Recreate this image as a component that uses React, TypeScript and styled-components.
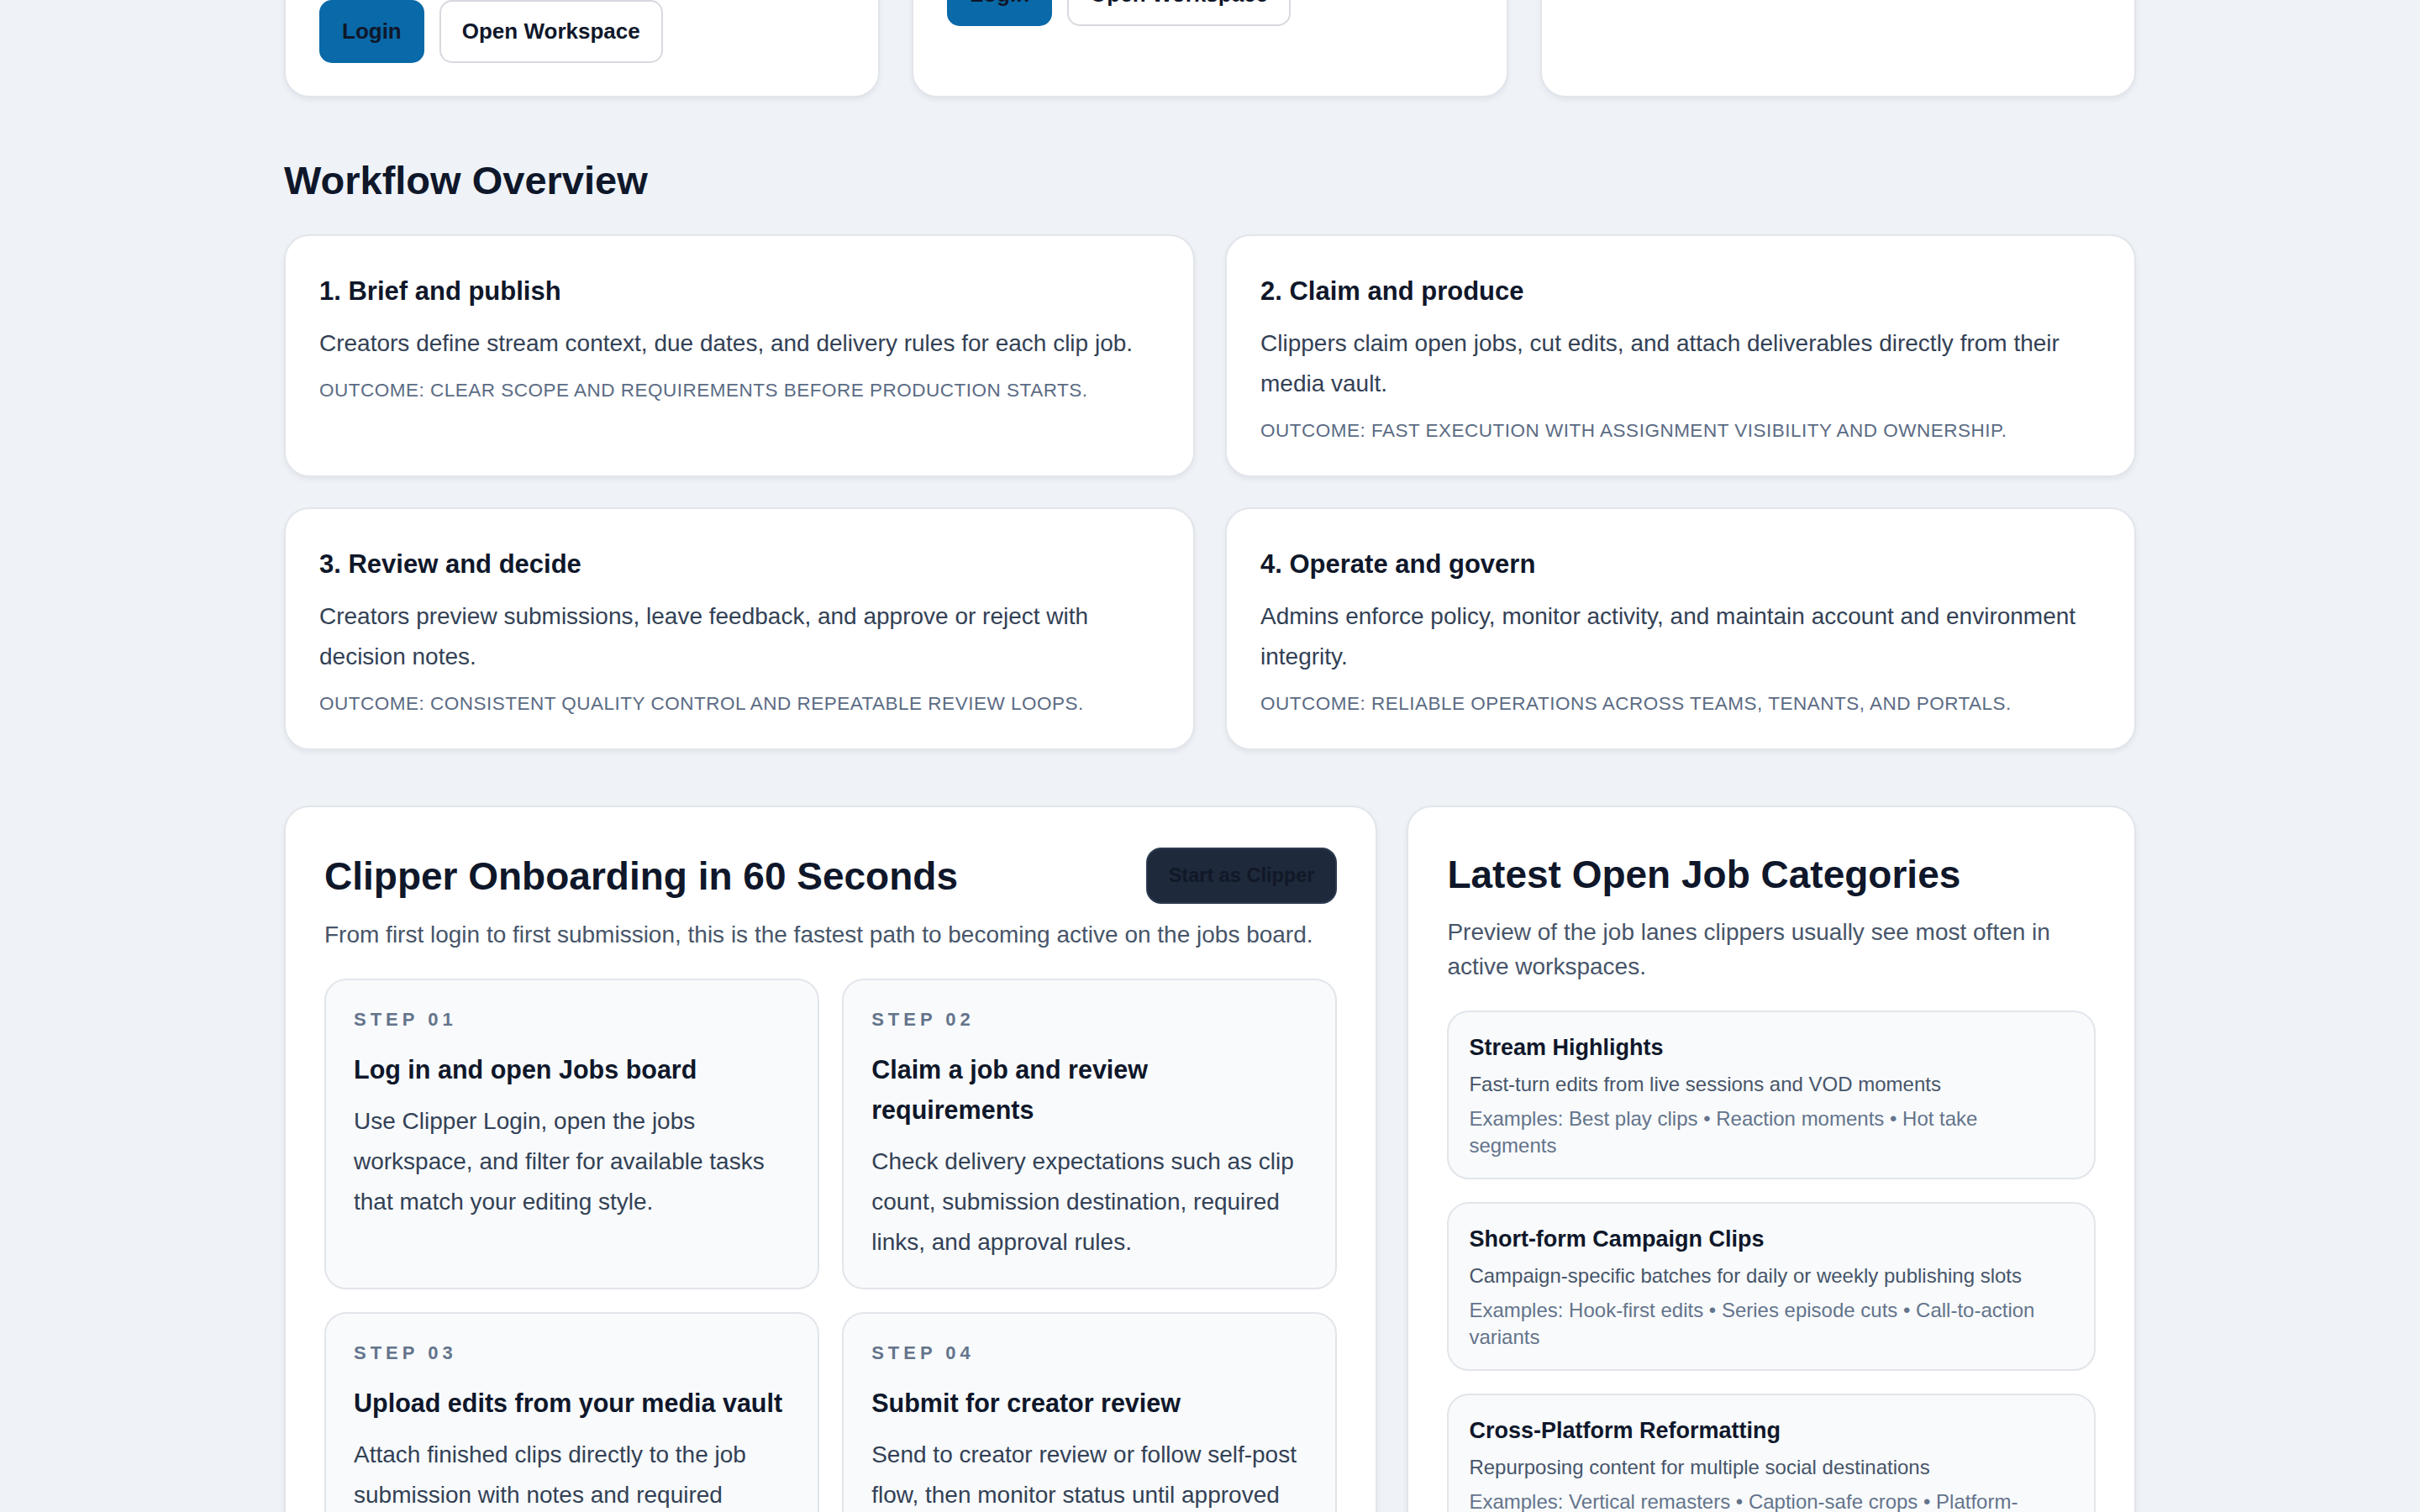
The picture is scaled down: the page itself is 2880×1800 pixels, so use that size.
import styled, { createGlobalStyle } from 'styled-components'

const GlobalStyle = createGlobalStyle`
	* {
		box-sizing: border-box;
	}
	body {
		margin: 0;
		background: #eff3f8;
		font-family: 'Liberation Sans', Arial, sans-serif;
		color: #0f172a;
	}
`

const Page = styled.main`
	width: 2204px;
	margin: -258px auto 0;
	padding-bottom: 120px;
`

const PortalRow = styled.section`
	display: grid;
	grid-template-columns: repeat(3, 1fr);
	gap: 38px;
`

const PortalCard = styled.div`
	background: #fff;
	border: 2px solid #e2e5ea;
	border-radius: 30px;
	box-shadow: 0 3px 6px rgba(15, 23, 42, 0.06);
	padding: 40px 40px 39px;
`

const PortalTitle = styled.h3`
	margin: 0 0 12px;
	font-size: 34px;
	line-height: 44px;
	font-weight: 700;
`

const PortalText = styled.p`
	margin: 0;
	font-size: 28px;
	line-height: 44px;
	color: #475569;
`

const Actions = styled.div`
	display: flex;
	gap: 18px;
	margin-top: 28px;
`

const Button = styled.button<{ $primary?: boolean }>`
	height: 75px;
	padding: 0 25px;
	border-radius: 15px;
	border: 2px solid ${(p) => (p.$primary ? '#0a69a8' : '#d6d9de')};
	background: ${(p) => (p.$primary ? '#0a69a8' : '#fff')};
	color: #0f172a;
	font-family: inherit;
	font-size: 26px;
	font-weight: 700;
`

const SectionTitle = styled.h2`
	margin: 71px 0 36px;
	font-size: 47px;
	line-height: 56px;
	font-weight: 700;
`

const WorkflowGrid = styled.section`
	display: grid;
	grid-template-columns: 1fr 1fr;
	gap: 36px;
`

const WorkflowCard = styled.div`
	background: #fff;
	border: 2px solid #e2e5ea;
	border-radius: 30px;
	box-shadow: 0 3px 6px rgba(15, 23, 42, 0.06);
	padding: 42px 40px 35px;
`

const CardTitle = styled.h3`
	margin: 0 0 14px;
	font-size: 31px;
	line-height: 48px;
	font-weight: 700;
`

const CardText = styled.p`
	margin: 0 0 14px;
	font-size: 28px;
	line-height: 48px;
	color: #334155;
`

const Outcome = styled.p`
	margin: 0;
	font-size: 22.5px;
	line-height: 36px;
	letter-spacing: 0.5px;
	text-transform: uppercase;
	color: #5b6b84;
`

const BottomGrid = styled.section`
	display: grid;
	grid-template-columns: 1.5fr 1fr;
	gap: 35px;
	align-items: start;
	margin-top: 66px;
`

const Panel = styled.div`
	background: #fff;
	border: 2px solid #e2e5ea;
	border-radius: 30px;
	box-shadow: 0 3px 6px rgba(15, 23, 42, 0.06);
	padding: 48px 46px 46px;
`

const PanelHead = styled.div`
	display: flex;
	align-items: center;
	justify-content: space-between;
	gap: 24px;
`

const PanelTitle = styled.h2`
	margin: 0;
	font-size: 46px;
	line-height: 64px;
	font-weight: 700;
`

const DarkButton = styled.button`
	height: 67px;
	padding: 0 25px;
	border-radius: 18px;
	border: 2px solid #2c3a50;
	background: #1e293b;
	color: #111827;
	font-family: inherit;
	font-size: 23.5px;
	font-weight: 700;
`

const PanelSub = styled.p`
	margin: 16px 0 32px;
	font-size: 28px;
	line-height: 41px;
	color: #475569;
`

const StepGrid = styled.div`
	display: grid;
	grid-template-columns: 1fr 1fr;
	gap: 27px;
`

const StepCard = styled.div`
	background: #f8fafc;
	border: 2px solid #e2e5ea;
	border-radius: 26px;
	padding: 32px 33px 30px;
`

const StepLabel = styled.div`
	margin-bottom: 20px;
	font-size: 22px;
	line-height: 30px;
	font-weight: 700;
	letter-spacing: 5px;
	color: #64748b;
`

const StepTitle = styled.h4`
	margin: 0 0 14px;
	font-size: 30.5px;
	line-height: 48px;
	font-weight: 700;
`

const StepText = styled.p`
	margin: 0;
	font-size: 28px;
	line-height: 48px;
	color: #334155;
`

const CategoryList = styled.div`
	display: flex;
	flex-direction: column;
	gap: 27px;
`

const CategoryCard = styled.div`
	background: #f8fafc;
	border: 2px solid #e2e5ea;
	border-radius: 26px;
	padding: 22px 34px 22px 24px;
`

const CategoryTitle = styled.h4`
	margin: 0 0 8px;
	font-size: 27px;
	line-height: 40px;
	font-weight: 700;
`

const CategoryText = styled.p<{ $muted?: boolean }>`
	margin: 0;
	font-size: 24px;
	line-height: 32px;
	color: ${(p) => (p.$muted ? '#64748b' : '#475569')};
	& + & {
		margin-top: 9px;
	}
`

const portals = [
	{
		title: 'Creator Portal',
		text: 'Publish clip briefs with stream context and due dates, review incoming submissions, and approve final deliverables in one place.',
		actions: true,
	},
	{
		title: 'Clipper Portal',
		text: 'Browse open jobs, claim the work that fits your style, and submit edits for review.',
		actions: true,
	},
	{
		title: 'Admin Portal',
		text: 'Manage tenants, policy, and audit trails.',
		actions: false,
	},
]

const workflow = [
	{
		title: '1. Brief and publish',
		text: 'Creators define stream context, due dates, and delivery rules for each clip job.',
		outcome: 'Outcome: Clear scope and requirements before production starts.',
	},
	{
		title: '2. Claim and produce',
		text: 'Clippers claim open jobs, cut edits, and attach deliverables directly from their media vault.',
		outcome: 'Outcome: Fast execution with assignment visibility and ownership.',
	},
	{
		title: '3. Review and decide',
		text: 'Creators preview submissions, leave feedback, and approve or reject with decision notes.',
		outcome: 'Outcome: Consistent quality control and repeatable review loops.',
	},
	{
		title: '4. Operate and govern',
		text: 'Admins enforce policy, monitor activity, and maintain account and environment integrity.',
		outcome: 'Outcome: Reliable operations across teams, tenants, and portals.',
	},
]

const steps = [
	{
		label: 'STEP 01',
		title: 'Log in and open Jobs board',
		text: 'Use Clipper Login, open the jobs workspace, and filter for available tasks that match your editing style.',
	},
	{
		label: 'STEP 02',
		title: 'Claim a job and review requirements',
		text: 'Check delivery expectations such as clip count, submission destination, required links, and approval rules.',
	},
	{
		label: 'STEP 03',
		title: 'Upload edits from your media vault',
		text: 'Attach finished clips directly to the job submission with notes and required metadata.',
	},
	{
		label: 'STEP 04',
		title: 'Submit for creator review',
		text: 'Send to creator review or follow self-post flow, then monitor status until approved and closed.',
	},
]

const categories = [
	{
		title: 'Stream Highlights',
		text: 'Fast-turn edits from live sessions and VOD moments',
		examples: 'Examples: Best play clips • Reaction moments • Hot take segments',
	},
	{
		title: 'Short-form Campaign Clips',
		text: 'Campaign-specific batches for daily or weekly publishing slots',
		examples: 'Examples: Hook-first edits • Series episode cuts • Call-to-action variants',
	},
	{
		title: 'Cross-Platform Reformatting',
		text: 'Repurposing content for multiple social destinations',
		examples: 'Examples: Vertical remasters • Caption-safe crops • Platform-native intros',
	},
]

const App = () => {
	return (
		<>
			<GlobalStyle />
			<Page>
				{/* Portals */}
				<PortalRow>
					{portals.map((portal) => (
						<PortalCard key={portal.title}>
							<PortalTitle>{portal.title}</PortalTitle>
							<PortalText>{portal.text}</PortalText>
							{portal.actions && (
								<Actions>
									<Button $primary>Login</Button>
									<Button>Open Workspace</Button>
								</Actions>
							)}
						</PortalCard>
					))}
				</PortalRow>

				{/* Workflow */}
				<SectionTitle>Workflow Overview</SectionTitle>
				<WorkflowGrid>
					{workflow.map((item) => (
						<WorkflowCard key={item.title}>
							<CardTitle>{item.title}</CardTitle>
							<CardText>{item.text}</CardText>
							<Outcome>{item.outcome}</Outcome>
						</WorkflowCard>
					))}
				</WorkflowGrid>

				<BottomGrid>
					{/* Onboarding */}
					<Panel>
						<PanelHead>
							<PanelTitle>Clipper Onboarding in 60 Seconds</PanelTitle>
							<DarkButton>Start as Clipper</DarkButton>
						</PanelHead>
						<PanelSub>
							From first login to first submission, this is the fastest path to
							becoming active on the jobs board.
						</PanelSub>
						<StepGrid>
							{steps.map((step) => (
								<StepCard key={step.label}>
									<StepLabel>{step.label}</StepLabel>
									<StepTitle>{step.title}</StepTitle>
									<StepText>{step.text}</StepText>
								</StepCard>
							))}
						</StepGrid>
					</Panel>

					{/* Categories */}
					<Panel>
						<PanelTitle>Latest Open Job Categories</PanelTitle>
						<PanelSub>
							Preview of the job lanes clippers usually see most often in active
							workspaces.
						</PanelSub>
						<CategoryList>
							{categories.map((cat) => (
								<CategoryCard key={cat.title}>
									<CategoryTitle>{cat.title}</CategoryTitle>
									<CategoryText>{cat.text}</CategoryText>
									<CategoryText $muted>{cat.examples}</CategoryText>
								</CategoryCard>
							))}
						</CategoryList>
					</Panel>
				</BottomGrid>
			</Page>
		</>
	)
}

export default App
